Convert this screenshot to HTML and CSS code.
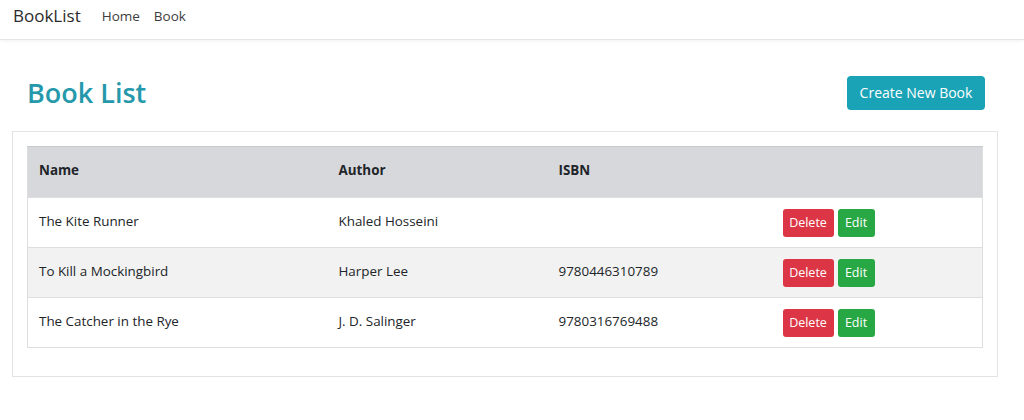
FILE: index.html
```html
<!DOCTYPE html>
<html lang="en">
<head>
<meta charset="utf-8">
<title>BookList</title>
<link rel="stylesheet" href="styles.css">
</head>
<body>
<nav class="navbar">
  <span class="brand">BookList</span>
  <a class="nav-link" href="#">Home</a>
  <a class="nav-link" href="#">Book</a>
</nav>
<main class="main">
  <div class="title-row">
    <h1 class="title">Book List</h1>
    <button class="btn btn-create">Create New Book</button>
  </div>
  <div class="card">
    <table class="books">
      <colgroup>
        <col class="c-name"><col class="c-author"><col class="c-isbn"><col class="c-actions">
      </colgroup>
      <thead>
        <tr><th>Name</th><th>Author</th><th>ISBN</th><th></th></tr>
      </thead>
      <tbody>
        <tr><td>The Kite Runner</td><td>Khaled Hosseini</td><td></td><td class="actions"><button class="btn btn-sm btn-delete">Delete</button><button class="btn btn-sm btn-edit">Edit</button></td></tr>
        <tr class="alt"><td>To Kill a Mockingbird</td><td>Harper Lee</td><td>9780446310789</td><td class="actions"><button class="btn btn-sm btn-delete">Delete</button><button class="btn btn-sm btn-edit">Edit</button></td></tr>
        <tr><td>The Catcher in the Rye</td><td>J. D. Salinger</td><td>9780316769488</td><td class="actions"><button class="btn btn-sm btn-delete">Delete</button><button class="btn btn-sm btn-edit">Edit</button></td></tr>
      </tbody>
    </table>
  </div>
</main>
</body>
</html>
```
FILE: styles.css
```css
* { box-sizing: border-box; }
body {
  margin: 0;
  font-family: "Open Sans", "Noto Sans", sans-serif;
  font-size: 13.4px;
  color: #212529;
  background: #fff;
}
.navbar {
  height: 40px;
  display: flex;
  align-items: center;
  padding: 0 13px 8px;
  border-bottom: 1px solid #e6e6e6;
  box-shadow: 0 1px 4px rgba(0,0,0,0.06);
}
.brand {
  font-size: 17px;
  color: #2b2b2b;
  margin-right: 21px;
}
.nav-link {
  font-size: 13.5px;
  color: #3d3d3d;
  text-decoration: none;
  margin-right: 14px;
}
.main {
  padding: 0 26px 0 12px;
}
.title-row {
  display: flex;
  align-items: center;
  justify-content: space-between;
  margin-top: 36px;
  margin-bottom: 21px;
  padding-left: 15px;
}
.title {
  margin: 0;
  font-size: 27px;
  font-weight: 600;
  color: #2599ab;
  line-height: 34px;
}
.btn {
  font-family: inherit;
  border: none;
  color: #fff;
  cursor: pointer;
}
.btn-create {
  background: #1aa3b6;
  height: 34px;
  width: 138px;
  font-size: 14px;
  border-radius: 4px;
  margin-right: 13px;
  padding-bottom: 2px;
}
.card {
  border: 1px solid #e3e3e3;
  padding: 14px 14px 28px;
}
.books {
  width: 100%;
  border-collapse: collapse;
  border: 1px solid #dedede;
}
.c-name { width: 300px; }
.c-author { width: 220px; }
.c-isbn { width: 224px; }
.books th {
  background: #d7d8dc;
  border-top: 1px solid #c8c9cc;
  text-align: left;
  font-weight: 700;
  height: 51px;
  padding: 0 12px 4px 11px;
}
.books td {
  height: 50px;
  padding: 0 12px 4px 11px;
  border-top: 1px solid #dedede;
}
.books td.actions { padding-bottom: 0; }
.books tr.alt td { background: #f2f2f2; }
.btn-sm {
  height: 28px;
  font-size: 12.5px;
  border-radius: 3px;
  padding: 0 6px;
  vertical-align: middle;
}
.btn-delete { background: #dc3545; width: 51px; margin-right: 4px; }
.btn-edit { background: #28a745; width: 37px; }
```
